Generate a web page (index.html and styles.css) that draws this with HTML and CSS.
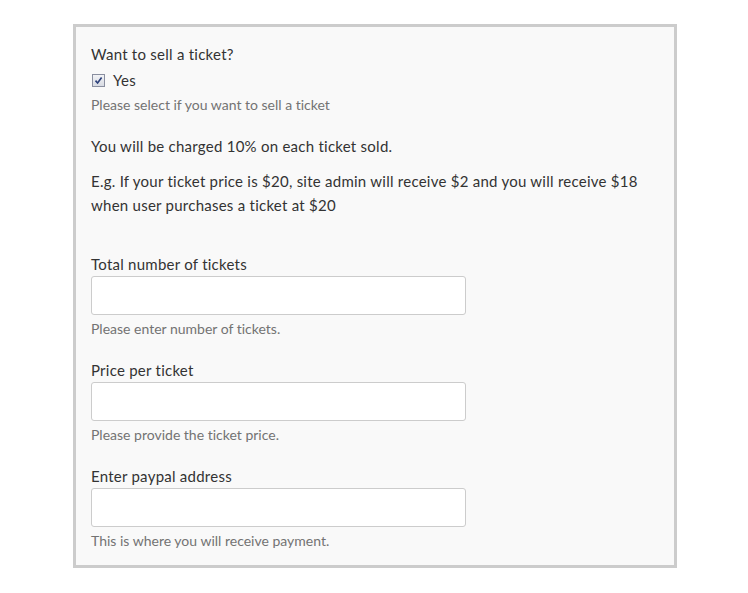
FILE: index.html
```html
<!DOCTYPE html>
<html>
<head>
<meta charset="utf-8">
<link rel="stylesheet" href="styles.css">
</head>
<body>
<div class="panel">
  <div class="group first">
    <div class="label">Want to sell a ticket?</div>
    <label class="check"><span class="box"><svg width="9" height="9" viewBox="0 0 9 9"><path d="M1.5 4.6 L3.6 7 L7.6 1.6" fill="none" stroke="#2b3f7a" stroke-width="1.6"/></svg></span>Yes</label>
    <div class="help">Please select if you want to sell a ticket</div>
  </div>
  <p class="note">You will be charged 10% on each ticket sold.</p>
  <p class="note">E.g. If your ticket price is $20, site admin will receive $2 and you will receive $18 when user purchases a ticket at $20</p>
  <div class="fields">
    <div class="group">
      <div class="label">Total number of tickets</div>
      <input class="input" type="text">
      <div class="help">Please enter number of tickets.</div>
    </div>
    <div class="group">
      <div class="label">Price per ticket</div>
      <input class="input" type="text">
      <div class="help">Please provide the ticket price.</div>
    </div>
    <div class="group">
      <div class="label">Enter paypal address</div>
      <input class="input" type="text">
      <div class="help">This is where you will receive payment.</div>
    </div>
  </div>
</div>
</body>
</html>
```
FILE: styles.css
```css
html, body {
  margin: 0;
  padding: 0;
  background: #ffffff;
}
body {
  font-family: Lato, "Open Sans", sans-serif;
  font-size: 15px;
  letter-spacing: 0.25px;
  font-variant-ligatures: none;
  color: #333333;
  padding: 24px 0 0 73px;
}
.panel {
  width: 568px;
  border: 3px solid #cccccc;
  background: #f9f9f9;
  padding: 16px 15px 14px 15px;
}
.label {
  line-height: 22px;
  color: #333333;
}
.check {
  display: flex;
  align-items: center;
  line-height: 22px;
  margin-top: 4px;
}
.box {
  width: 11px;
  height: 11px;
  border: 1px solid #8a8fa0;
  background: linear-gradient(#f2f3f6, #d8dbe3);
  display: inline-flex;
  align-items: center;
  justify-content: center;
  margin-right: 8px;
  margin-left: 1px;
}
.help {
  font-size: 14px;
  letter-spacing: 0;
  color: #737373;
  line-height: 20px;
  margin-top: 4px;
}
.note {
  margin: 0;
  line-height: 24px;
}
.first {
  margin-bottom: 19px;
}
.note + .note {
  margin-top: 11px;
}
.fields {
  margin-top: 36px;
  display: flex;
  flex-direction: column;
  gap: 20px;
}
.group .input {
  display: block;
  box-sizing: border-box;
  width: 375px;
  height: 39px;
  margin: 1px 0 0 0;
  border: 1px solid #cccccc;
  border-radius: 3px;
  background: #ffffff;
  padding: 6px 12px;
  font-family: inherit;
  font-size: 15px;
}
```
